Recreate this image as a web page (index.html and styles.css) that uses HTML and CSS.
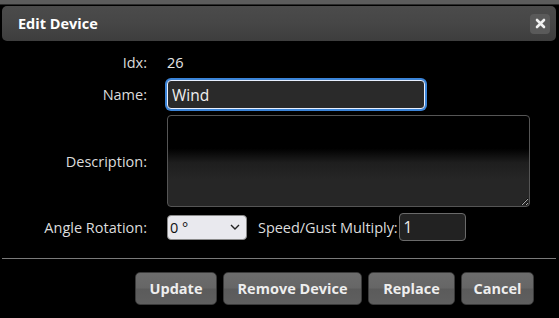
FILE: index.html
```html
<!DOCTYPE html>
<html>
<head>
<meta charset="utf-8">
<link rel="stylesheet" href="styles.css">
</head>
<body>
<div class="backdrop"></div>
<div class="dialog">
  <div class="titlebar">
    <span class="title">Edit Device</span>
    <button class="close" type="button">
      <svg width="11" height="11" viewBox="0 0 11 11"><path d="M2 2 L9 9 M9 2 L2 9" stroke="#f0f0f0" stroke-width="2.6" stroke-linecap="round"/></svg>
    </button>
  </div>
  <div class="form">
    <div class="label row-idx">Idx:</div>
    <div class="value row-idx">26</div>

    <div class="label row-name">Name:</div>
    <div class="row-name"><input class="name-input" type="text" value="Wind"></div>

    <div class="label">Description:</div>
    <div><textarea class="desc"></textarea></div>

    <div class="label">Angle Rotation:</div>
    <div class="angle-row">
      <div class="select"><span>0 °</span>
        <svg width="10" height="6" viewBox="0 0 10 6"><path d="M1 1 L5 5 L9 1" fill="none" stroke="#222" stroke-width="1.4"/></svg>
      </div>
      <span class="label speed-label">Speed/Gust Multiply:</span>
      <input class="mult" type="text" value="1">
    </div>
  </div>
  <div class="sep"></div>
  <div class="buttons">
    <button class="btn btn-update" type="button">Update</button>
    <button class="btn btn-remove" type="button">Remove Device</button>
    <button class="btn btn-replace" type="button">Replace</button>
    <button class="btn btn-cancel" type="button">Cancel</button>
  </div>
</div>
</body>
</html>
```
FILE: styles.css
```css
html, body {
  margin: 0;
  padding: 0;
  background: #000;
  font-family: "Open Sans", "Noto Sans", sans-serif;
  overflow: hidden;
}
.backdrop {
  height: 4px;
  background: #5c5c5c;
  border-bottom: 1px solid #2a2a2a;
}
.dialog {
  width: 556px;
  background: #000;
}
.titlebar {
  margin: 1px 0 0 2px;
  height: 35px;
  box-sizing: border-box;
  border-radius: 5px;
  background: linear-gradient(to bottom, #4b4b4b 0%, #464646 50%, #3d3d3d 100%);
  display: flex;
  align-items: center;
  justify-content: space-between;
  padding: 0 6px 0 16px;
}
.title {
  color: #fff;
  font-weight: 700;
  font-size: 14.5px;
}
.close {
  width: 20px;
  height: 20px;
  border: none;
  border-radius: 4px;
  background: #5a5a5a;
  padding: 0;
  display: flex;
  align-items: center;
  justify-content: center;
}
.form {
  display: grid;
  grid-template-columns: 147px 1fr;
  column-gap: 20px;
  row-gap: 6px;
  padding-top: 12px;
  color: #dcdcdc;
  font-size: 14.5px;
}
.label {
  text-align: right;
  align-self: center;
  color: #dcdcdc;
}
.value {
  line-height: 20px;
  color: #e6e6e6;
}
.row-idx { line-height: 20px; }
.row-name { margin-top: 1px; }
.name-input {
  display: block;
  width: 258px;
  height: 29px;
  box-sizing: border-box;
  border: 1px solid #e8f0ff;
  border-radius: 4px;
  box-shadow: 0 0 0 2px #3b84d8;
  background: #2a2a2a;
  color: #f0f0f0;
  font-family: inherit;
  font-size: 15.5px;
  padding: 0 4px;
  outline: none;
}
.desc {
  display: block;
  width: 363px;
  height: 92px;
  box-sizing: border-box;
  border: 1px solid #555;
  border-radius: 4px;
  background: linear-gradient(to bottom, #000 0%, #000 36%, #1e1e1e 52%, #262626 70%, #262626 100%);
  margin: 0;
}
.angle-row {
  display: flex;
  align-items: center;
  height: 28px;
}
.select {
  width: 80px;
  height: 25px;
  box-sizing: border-box;
  border: 1px solid #8a8a8a;
  border-radius: 4px;
  background: #e9e9ee;
  color: #111;
  display: flex;
  align-items: center;
  justify-content: space-between;
  padding: 0 6px 0 2px;
  font-size: 14.5px;
}
.speed-label {
  margin-left: 11px;
  margin-right: 1px;
  letter-spacing: -0.05px;
}
.mult {
  width: 67px;
  height: 28px;
  box-sizing: border-box;
  border: 1px solid #6a6a6a;
  border-radius: 4px;
  background: #222;
  color: #eee;
  font-family: inherit;
  font-size: 15.5px;
  padding: 0 4px;
  outline: none;
}
.sep {
  margin: 17px 0 0 2px;
  height: 1px;
  background: #7a7a7a;
}
.buttons {
  display: flex;
  justify-content: flex-end;
  gap: 6px;
  padding: 13px 22px 0 0;
}
.btn {
  height: 33px;
  box-sizing: border-box;
  border: 1px solid #3a3a3a;
  border-radius: 5px;
  background: linear-gradient(to bottom, #6c6c6c 0%, #666 48%, #5b5b5b 52%, #5f5f5f 100%);
  color: #eeeeee;
  font-family: inherit;
  font-weight: 700;
  font-size: 14.5px;
  padding: 0;
  text-align: center;
}
.btn-update { width: 82px; }
.btn-remove { width: 139px; }
.btn-replace { width: 87px; }
.btn-cancel { width: 73px; }
```
